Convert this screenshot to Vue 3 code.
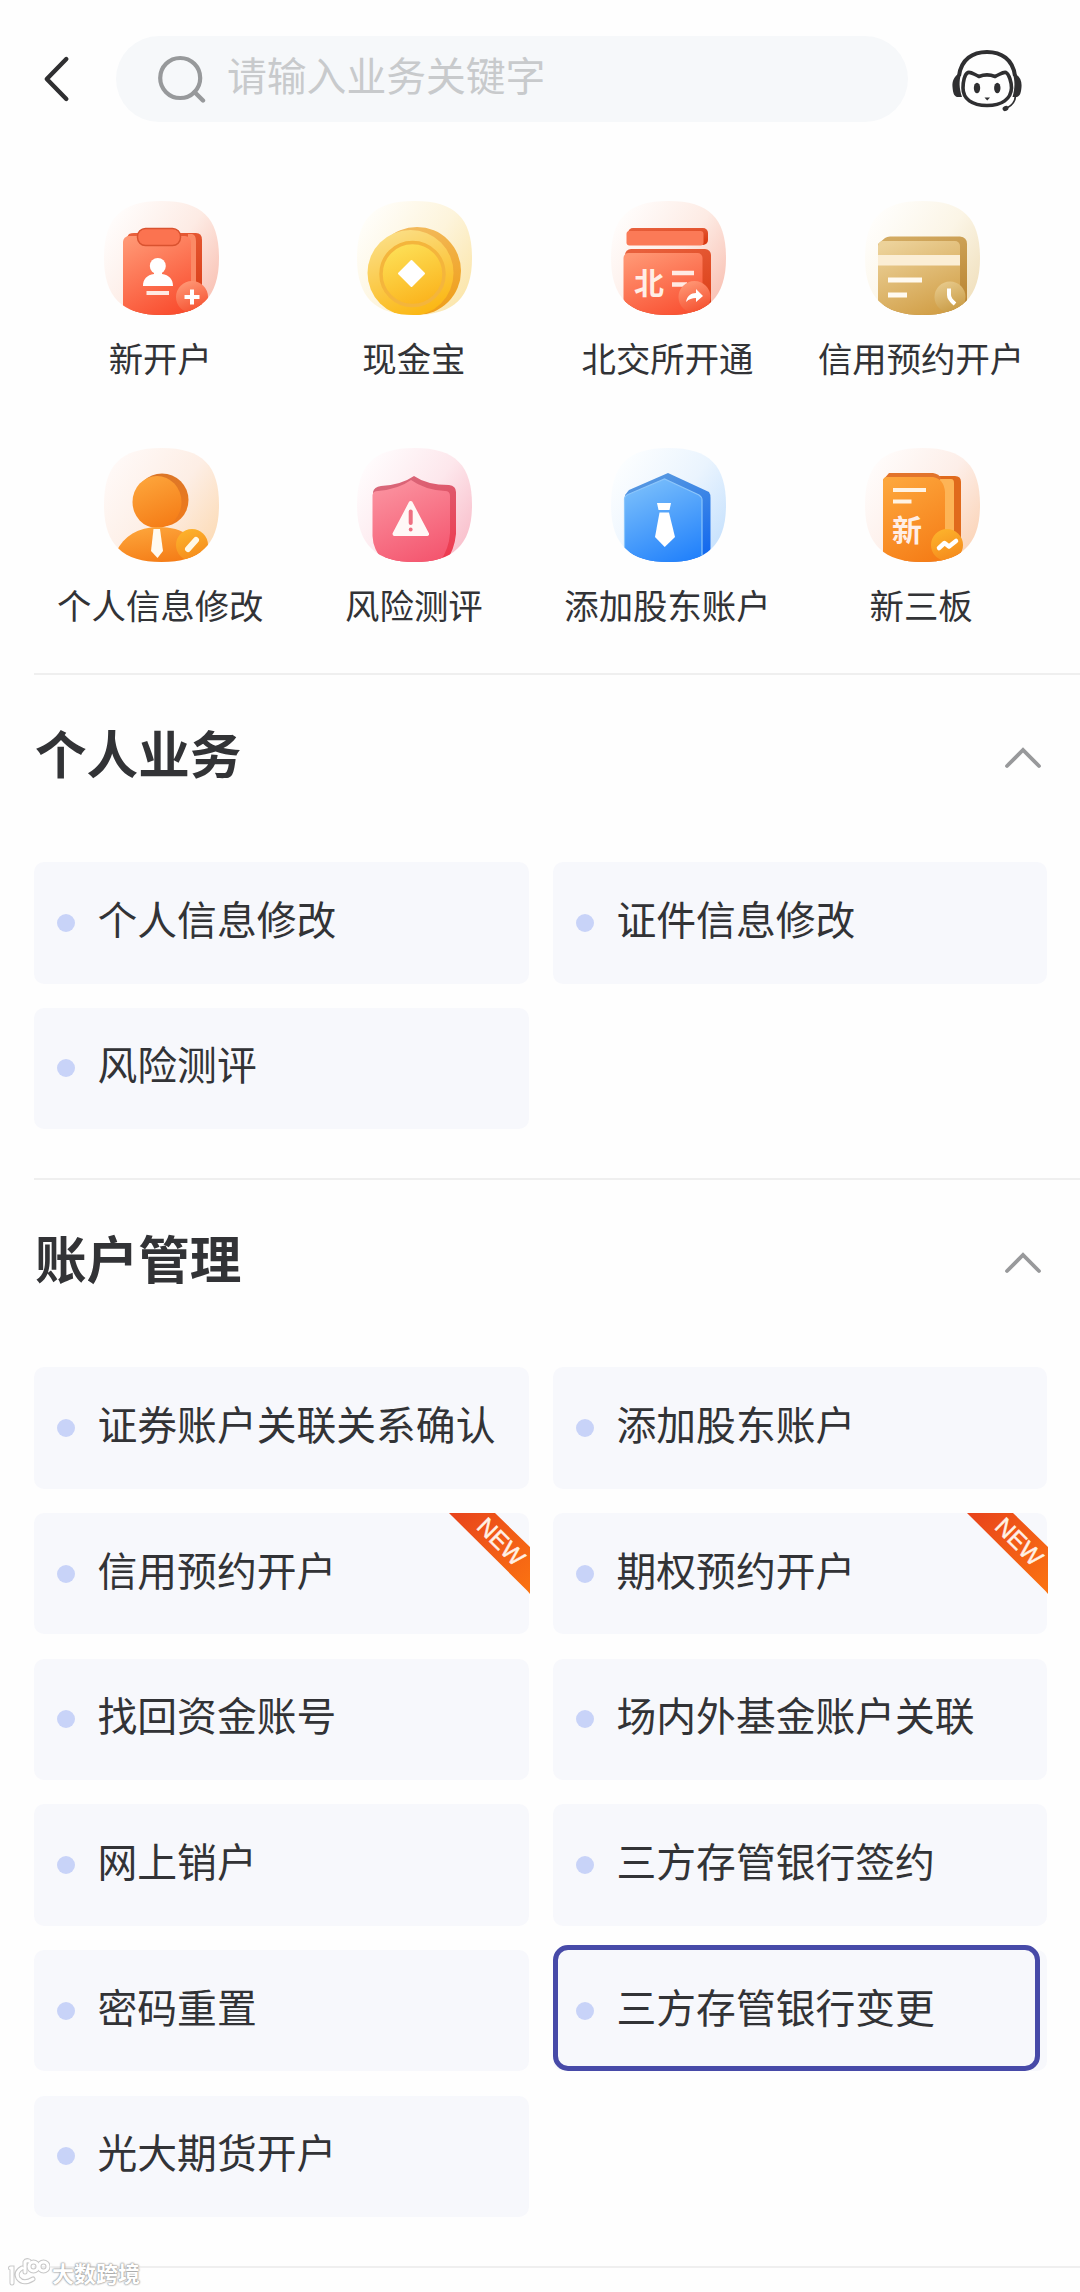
<script setup>
import { ref } from 'vue'

const shortcuts = [
  { icon: 'open', tint: 'red', label: '新开户' },
  { icon: 'coin', tint: 'yellow', label: '现金宝' },
  { icon: 'bse', tint: 'red', label: '北交所开通' },
  { icon: 'card', tint: 'gold', label: '信用预约开户' },
  { icon: 'person', tint: 'orange', label: '个人信息修改' },
  { icon: 'risk', tint: 'pink', label: '风险测评' },
  { icon: 'holder', tint: 'blue', label: '添加股东账户' },
  { icon: 'board', tint: 'peach', label: '新三板' },
]

const sections = ref([
  {
    title: '个人业务',
    open: true,
    items: [{ name: '个人信息修改' }, { name: '证件信息修改' }, { name: '风险测评' }],
  },
  {
    title: '账户管理',
    open: true,
    items: [
      { name: '证券账户关联关系确认' },
      { name: '添加股东账户' },
      { name: '信用预约开户', isNew: true },
      { name: '期权预约开户', isNew: true },
      { name: '找回资金账号' },
      { name: '场内外基金账户关联' },
      { name: '网上销户' },
      { name: '三方存管银行签约' },
      { name: '密码重置' },
      { name: '三方存管银行变更', active: true },
      { name: '光大期货开户' },
    ],
  },
])

// background tint of the rounded tiles
const tints = {
  red: ['#fffdfc', '#fdebe4', '#f9c3b6'],
  yellow: ['#fffefa', '#fdf4db', '#fbe6ac'],
  gold: ['#fffefc', '#fbf5e6', '#f1e1bf'],
  orange: ['#fff9f7', '#fdeee5', '#fcdcb8'],
  pink: ['#fffcfd', '#fde7ec', '#f9c1cd'],
  blue: ['#fcfeff', '#eaf4fe', '#c8e2fd'],
  peach: ['#fffcfb', '#fdeee8', '#fbd5ba'],
}

// front face and side colours of the glyphs
const faces = {
  red: ['#ff9673', '#f9492b'],
  redDark: ['#e8603c', '#d93a12'],
  yellow: ['#fbe08a', '#fbb713'],
  yellowIn: ['#fde25a', '#fbb41d'],
  yellowDark: ['#f3bd62', '#ef9f1c'],
  gold: ['#ecd29a', '#cf9a3f'],
  goldDark: ['#d3ab62', '#b98330'],
  orange: ['#fda63c', '#f57d17'],
  orangeDark: ['#d9762a', '#ee7a1c'],
  pink: ['#fb93a0', '#f4566f'],
  pinkDark: ['#d76a7c', '#ee3a4f'],
  blue: ['#7cc0fb', '#2382fb'],
  blueDark: ['#5b9be0', '#1268ee'],
  badge: ['#ff9a78', '#f5502f'],
  badgeGold: ['#e8cb8d', '#c99b45'],
  badgeOrange: ['#fdb42c', '#f58a1c'],
}
</script>

<template>
  <div class="page">
    <svg class="defs" width="0" height="0">
      <defs>
        <linearGradient v-for="(c, name) in tints" :id="'tint-' + name" :key="name" x1="0.1" y1="0.1" x2="1" y2="0.75">
          <stop offset="0" :stop-color="c[0]" />
          <stop offset="0.55" :stop-color="c[1]" />
          <stop offset="1" :stop-color="c[2]" />
        </linearGradient>
        <linearGradient v-for="(c, name) in faces" :id="'face-' + name" :key="name" x1="0.2" y1="0" x2="0.6" y2="1">
          <stop offset="0" :stop-color="c[0]" />
          <stop offset="1" :stop-color="c[1]" />
        </linearGradient>
        <linearGradient id="ribbon" x1="0" y1="0" x2="1" y2="1">
          <stop offset="0" stop-color="#e8431c" />
          <stop offset="1" stop-color="#fb7411" />
        </linearGradient>
        <clipPath id="tile">
          <path d="M57.5 0C99 0 115 18 115 57C115 96 97 114 57.5 114C18 114 0 96 0 57C0 18 16 0 57.5 0Z" />
        </clipPath>
      </defs>
    </svg>

    <header class="top">
      <svg class="back" width="28" height="50" viewBox="0 0 28 50">
        <path d="M24.300 5L4.800 25L24.300 45" fill="none" stroke="#2f2f31" stroke-width="4.400" stroke-linecap="round" stroke-linejoin="round" />
      </svg>
      <div class="search">
        <svg width="50" height="50" viewBox="0 0 50 50">
          <circle cx="24.2" cy="24" r="20" fill="none" stroke="#97999b" stroke-width="4.2" />
          <path d="M38.5 38L47 46.5" stroke="#97999b" stroke-width="4.4" stroke-linecap="round" />
        </svg>
        <span>请输入业务关键字</span>
      </div>
      <svg class="robot" width="72" height="66" viewBox="0 0 72 66">
        <path d="M8 28C10 11 22 4 36 4S62 11 64 28" fill="none" stroke="#2f2f31" stroke-width="4" />
        <path d="M9 25C3 28 1 33 1.500 39C2 45 3 48 6 49L11 49C8 40 8 33 10 26Z" fill="#2f2f31" />
        <path d="M63 25C69 28 71 33 70.500 39C70 45 69 48 66 49L61.500 49C64 40 64 33 62 26Z" fill="#2f2f31" />
        <path d="M28 28.500C33 26.500 39 26.500 44 28.500C49 26.500 52 23.500 55 24.500C58 26 60.500 34 60.500 40C60 51 51 57.500 36 57.500S12 51 12 40C12 34 13.500 26 17 24.500C20 23.500 23 26.500 28 28.500Z" fill="none" stroke="#2f2f31" stroke-width="3.600" stroke-linejoin="round" />
        <ellipse cx="26" cy="40" rx="3.200" ry="5.200" fill="#2f2f31" />
        <ellipse cx="46.300" cy="40" rx="3.200" ry="5.200" fill="#2f2f31" />
        <path d="M33.500 49.500H39L36.200 52.500Z" fill="#2f2f31" />
        <path d="M64.500 48C64 55 60 58 56 60" fill="none" stroke="#2f2f31" stroke-width="1.800" />
        <ellipse cx="54.500" cy="60.500" rx="3" ry="2.400" transform="rotate(-25 54.500 60.500)" fill="#2f2f31" />
      </svg>
    </header>

    <nav class="shortcuts">
      <div v-for="s in shortcuts" :key="s.label" class="shortcut">
        <svg width="115" height="114" viewBox="0 0 115 114">
          <g clip-path="url(#tile)">
            <rect width="115" height="114" :fill="`url(#tint-${s.tint})`" />

            <g v-if="s.icon === 'open'">
              <path d="M19 42L25 33Q27 32 30 32H92Q98 32 98 39V120H30Z" fill="url(#face-redDark)" />
              <path d="M84 33H88Q92 34 92 40V120H84Z" fill="#fb8a66" />
              <rect x="19" y="35" width="68" height="90" rx="6" fill="url(#face-red)" />
              <rect x="33.500" y="27.500" width="43" height="17" rx="8" fill="#fb7350" stroke="#d9522f" stroke-width="1.500" />
              <circle cx="53.800" cy="65" r="8" fill="#fff" />
              <path d="M50 70H58V73C65 74 69 78 69 85H39C39 78 43 74 50 73Z" fill="#fff" />
              <path d="M42.500 92H65" stroke="#ffe9e2" stroke-width="4" />
              <circle cx="88" cy="96" r="16" fill="url(#face-badge)" />
              <path d="M88 88.500V103.500M80.500 96H95.500" stroke="#fff" stroke-width="4" />
            </g>

            <g v-else-if="s.icon === 'coin'">
              <circle cx="60" cy="70" r="44" fill="url(#face-yellowDark)" />
              <circle cx="53.500" cy="72" r="43" fill="url(#face-yellow)" />
              <circle cx="55.500" cy="73" r="31.500" fill="url(#face-yellowIn)" stroke="#f4b53c" stroke-width="3.500" />
              <path d="M54.500 60L67 72.500L54.500 85L42 72.500Z" fill="#fff" stroke="#fff" stroke-width="2" stroke-linejoin="round" />
            </g>

            <g v-else-if="s.icon === 'bse'">
              <rect x="17" y="27" width="80" height="17" rx="5" fill="url(#face-redDark)" />
              <rect x="15.500" y="30" width="77" height="14.500" rx="3" fill="#fb7a57" />
              <rect x="14" y="48" width="86" height="80" rx="6" fill="url(#face-redDark)" />
              <rect x="12.500" y="52" width="79" height="76" rx="5" fill="url(#face-red)" />
              <text class="glyph" x="23" y="92.500">北</text>
              <path d="M61 72H83M61 83.500H76" stroke="#ffeae3" stroke-width="4.500" />
              <circle cx="83.500" cy="96" r="16" fill="url(#face-badge)" />
              <path d="M75 101C76 95 80 92 85 92V88L92 95L85 101V97C81 97 78 98 75 101Z" fill="#fff" />
            </g>

            <g v-else-if="s.icon === 'card'">
              <path d="M13 43L20 37Q22 35.500 25 35.500H95Q102 36 102 43V120H20Z" fill="url(#face-goldDark)" />
              <rect x="13" y="40" width="82" height="86" rx="5" fill="url(#face-gold)" />
              <rect x="13" y="54" width="82" height="10.500" fill="#fbeed5" />
              <path d="M23 79H57M23 94H42" stroke="#fffaf0" stroke-width="5" />
              <circle cx="85" cy="96" r="15.500" fill="url(#face-badgeGold)" />
              <path d="M84 87.500V94Q84 98 90 103" fill="none" stroke="#fff" stroke-width="4" />
            </g>

            <g v-else-if="s.icon === 'person'">
              <circle cx="58" cy="52" r="26.500" fill="url(#face-orangeDark)" />
              <ellipse cx="53" cy="54" rx="24.500" ry="26" fill="url(#face-orange)" />
              <path d="M12 104C20 88 34 79 54 79C80 79 94 90 100 114H12Z" fill="url(#face-orange)" />
              <path d="M49.500 81H56L59 103L53.500 110L47 103Z" fill="#fffaf0" />
              <circle cx="88" cy="97" r="16" fill="url(#face-badgeOrange)" />
              <path d="M84 101L92 92" stroke="#fff8e6" stroke-width="6" stroke-linecap="round" />
            </g>

            <g v-else-if="s.icon === 'risk'">
              <path d="M16 44Q17 39 24 38Q44 37 57 28Q70 37 92 37Q99 38 99 44V86Q97 106 84 120H30Z" fill="url(#face-pinkDark)" />
              <path d="M15.500 47Q16 43 21 43Q42 41 54 32Q68 42 88 43Q93 43 93 48V85Q92 104 78 120H32Q16 104 15.500 88Z" fill="url(#face-pink)" />
              <path d="M53.700 55L70 86H37.500Z" fill="#fff8f6" stroke="#fff8f6" stroke-width="4" stroke-linejoin="round" />
              <path d="M53.700 63.500V75" stroke="#ee6f80" stroke-width="4" stroke-linecap="round" />
              <circle cx="53.700" cy="81.500" r="1.900" fill="#ee6f80" />
            </g>

            <g v-else-if="s.icon === 'holder'">
              <path d="M14 47L18 42L57 25L98 44Q99.500 46 99.500 50V120H20Z" fill="url(#face-blueDark)" />
              <path d="M13.500 51Q13.500 48 17 46.500L53.500 31L88 47Q91 49 91 52V120H13.500Z" fill="url(#face-blue)" stroke="#8cc6fb" stroke-width="1.200" />
              <path d="M46 55H60L58.500 62H47.500Z" fill="#fff" />
              <path d="M48.500 64.500H58L64 89L53.700 99L44 89Z" fill="#fff" />
            </g>

            <g v-else>
              <path d="M24 28H90Q96 28 96 34V120H40Z" fill="#e06a1c" />
              <path d="M70 31H86Q89 31 89 35V120H70Z" fill="#fdb456" />
              <path d="M18 32L24 25H68Q74 26 76 30L70 40H18Z" fill="#e2742c" />
              <path d="M18 33Q18 29 22 29H68Q79 31 80 44V120H18Z" fill="url(#face-orange)" />
              <path d="M28 42H61M28 53.500H46.500" stroke="#fff3e4" stroke-width="4" />
              <text class="glyph" x="27" y="93">新</text>
              <circle cx="82" cy="97" r="16" fill="url(#face-badgeOrange)" />
              <path d="M74 100L79.500 95L84 98.500L91 93" fill="none" stroke="#fff" stroke-width="4.500" stroke-linecap="round" stroke-linejoin="round" />
            </g>
          </g>
        </svg>
        <span>{{ s.label }}</span>
      </div>
    </nav>

    <section v-for="sec in sections" :key="sec.title" class="section">
      <div class="section-head" @click="sec.open = !sec.open">
        <h2>{{ sec.title }}</h2>
        <svg width="40" height="24" viewBox="0 0 40 24">
          <path d="M4 20L20 4L36 20" fill="none" stroke="#98999b" stroke-width="3.800" stroke-linecap="round" />
        </svg>
      </div>
      <div v-if="sec.open" class="grid">
        <div v-for="item in sec.items" :key="item.name" class="item" :class="{ active: item.active }">
          <i class="dot"></i>
          <span>{{ item.name }}</span>
          <svg v-if="item.isNew" class="ribbon" width="81" height="81" viewBox="0 0 81 81">
            <path d="M0 0H46L81 34V81L78.500 78L3 3Z" fill="url(#ribbon)" />
            <text x="52" y="37" transform="rotate(45 52 29)">NEW</text>
          </svg>
        </div>
      </div>
    </section>

    <footer class="foot">
      <div class="mark">
        <svg width="42" height="30" viewBox="0 0 42 30">
          <g fill="none" stroke-linecap="round">
            <g stroke="#c8c8c8" stroke-width="5">
              <path d="M2.500 11H4V26M14 11Q7 15 10 21Q15 28 25 22M17 15V5Q18 3 21 4" />
              <circle cx="25.500" cy="9.500" r="4.500" />
              <circle cx="35.500" cy="9.500" r="4.500" />
            </g>
            <g stroke="#fff" stroke-width="3">
              <path d="M2.500 11H4V26M14 11Q7 15 10 21Q15 28 25 22M17 15V5Q18 3 21 4" />
              <circle cx="25.500" cy="9.500" r="4.500" />
              <circle cx="35.500" cy="9.500" r="4.500" />
            </g>
          </g>
        </svg>
        <span>大数跨境</span>
      </div>
    </footer>
  </div>
</template>

<style>
body {
  background: #fefefe;
}
</style>

<style scoped>
.page {
  width: 1080px;
  height: 2292px;
  overflow: hidden;
  background: #fefefe;
  color: #323336;
  font-family: "Noto Sans CJK SC", "Liberation Sans", sans-serif;
}

.defs {
  position: absolute;
}

.top {
  display: flex;
  align-items: flex-start;
  height: 200px;
  padding: 36px 0 0 42px;
  box-sizing: border-box;
}

.back {
  margin-top: 18px;
}

.search {
  display: flex;
  align-items: center;
  width: 792px;
  height: 86px;
  margin-left: 46px;
  padding: 0 0 8px 40px;
  box-sizing: border-box;
  border-radius: 43px;
  background: #f6f8fa;
}

.search svg {
  margin-top: 8px;
}

.search span {
  margin: -2px 0 0 21px;
  color: #c8cacc;
  font-size: 39.8px;
  line-height: 60px;
}

.robot {
  margin: 12px 0 0 43px;
}

.shortcuts {
  display: grid;
  grid-template-columns: repeat(4, 253.6px);
  grid-auto-rows: 247px;
  height: 473px;
  padding: 1px 0 0 34.5px;
  box-sizing: border-box;
}

.shortcut {
  display: flex;
  flex-direction: column;
  align-items: center;
}

.shortcut span {
  margin: 17px 2px 0 0;
  font-size: 34.4px;
  line-height: 50px;
  white-space: nowrap;
}

.glyph {
  fill: #ffeee6;
  font-size: 30px;
  font-weight: 700;
}

.section {
  margin-left: 34px;
  padding-bottom: 49px;
  border-top: 2px solid #efefef;
}

.section-head {
  display: flex;
  align-items: center;
  justify-content: space-between;
  height: 187px;
  padding: 0 37px 28px 1px;
  box-sizing: border-box;
}

.section-head h2 {
  margin: -5px 0 0;
  font-size: 51.6px;
  line-height: 70px;
  font-weight: 700;
}

.section-head svg {
  margin-top: 7px;
}

.grid {
  display: grid;
  grid-template-columns: 495px 494px;
  grid-auto-rows: 121.5px;
  column-gap: 24px;
  row-gap: 24.2px;
}

.item {
  position: relative;
  display: flex;
  align-items: center;
  padding-left: 23px;
  border-radius: 10px;
  background: #f7f8fc;
}

.item span {
  margin: -10px 0 0 22.5px;
  font-size: 39.8px;
  line-height: 60px;
  white-space: nowrap;
}

.dot {
  width: 18px;
  height: 18px;
  border-radius: 50%;
  background: #c8d3f8;
}

/* frame drawn over the chosen entry */
.active::after {
  content: "";
  position: absolute;
  left: 0;
  top: -5px;
  width: 487px;
  height: 126px;
  box-sizing: border-box;
  border: 5px solid #474aa8;
  border-radius: 15px;
}

.ribbon {
  position: absolute;
  top: 0;
  right: -1px;
  overflow: visible;
}

.ribbon text {
  fill: #fff1e6;
  stroke: #fff1e6;
  stroke-width: 0.5px;
  font-family: "Liberation Sans", sans-serif;
  font-size: 24px;
  text-anchor: middle;
}

.foot {
  margin-left: 34px;
  border-top: 2px solid #efefef;
}

.mark {
  display: flex;
  align-items: center;
  margin: -12px 0 0 -26px;
}

.mark span {
  margin-left: 2px;
  color: #fff;
  font-size: 22px;
  line-height: 32px;
  font-weight: 700;
  text-shadow: 0 0 2px #999, 0 0 2px #999, 0 0 1px #aaa;
}
</style>
